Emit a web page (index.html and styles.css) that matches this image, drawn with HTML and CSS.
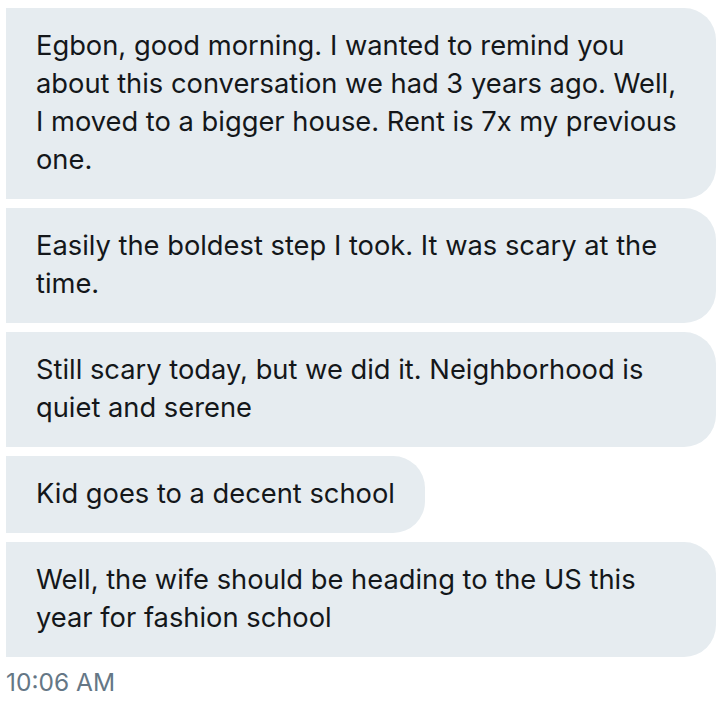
FILE: index.html
```html
<!DOCTYPE html>
<html>
<head>
<meta charset="utf-8">
<link rel="stylesheet" href="styles.css">
</head>
<body>
<div class="thread">
  <div class="bubble">Egbon, good morning. I wanted to remind you about this conversation we had 3 years ago. Well, I moved to a bigger house. Rent is 7x my previous one.</div>
  <div class="bubble">Easily the boldest step I took. It was scary at the time.</div>
  <div class="bubble">Still scary today, but we did it. Neighborhood is quiet and serene</div>
  <div class="bubble">Kid goes to a decent school</div>
  <div class="bubble">Well, the wife should be heading to the US this year for fashion school</div>
  <div class="time">10:06 AM</div>
</div>
</body>
</html>
```
FILE: styles.css
```css
html, body {
  margin: 0;
  padding: 0;
  background: #ffffff;
}
body {
  font-family: Inter, "Liberation Sans", Arial, sans-serif;
}
.thread {
  display: flex;
  flex-direction: column;
  align-items: flex-start;
  gap: 9px;
  padding: 8px 10px 0 6px;
}
.bubble {
  background: #e6ecf0;
  color: #14171a;
  font-size: 27.3px;
  line-height: 38px;
  padding: 19px 30px 20px 30px;
  border-radius: 0 32px 32px 0;
  max-width: 650px;
}
.time {
  color: #657786;
  font-size: 24.5px;
  line-height: 30px;
  padding-top: 1px;
}
```
